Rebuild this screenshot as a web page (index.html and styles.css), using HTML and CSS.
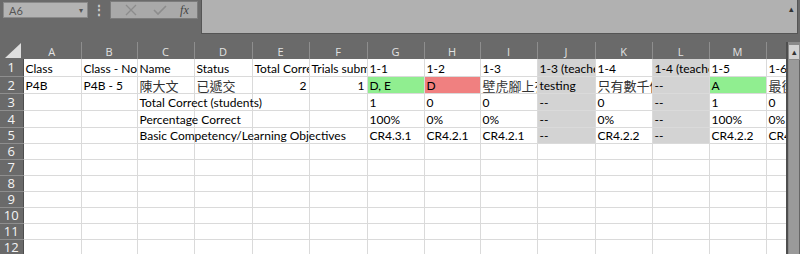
FILE: index.html
```html
<!DOCTYPE html>
<html lang="zh-Hant">
<head>
  <meta charset="UTF-8" />
  <title>Sheet1</title>
  <link rel="stylesheet" href="styles.css">
</head>
<body>
  <div class="toolbar">
    <div class="namebox">
      <span>A6</span>
      <span class="caret">&#9662;</span>
    </div>
    <div class="grip">&#8942;</div>
    <div class="fbuttons">
      <svg width="16" height="14" viewBox="0 0 16 14"><path d="M3 2 L13 12 M13 2 L3 12" stroke="#8c8c8c" stroke-width="1.3" fill="none"/></svg>
      <svg width="16" height="14" viewBox="0 0 16 14"><path d="M2 7 L6 11 L14 3" stroke="#8c8c8c" stroke-width="1.6" fill="none"/></svg>
      <span class="fx">fx</span>
    </div>
    <div class="formula">
      <span class="collapse">&#9652;</span>
    </div>
  </div>

  <div class="sheet">
    <div class="grid">
      <table>
        <colgroup>
          <col class="c-hd"><col class="c58"><col class="c56"><col class="c57"><col class="c58">
          <col class="c57"><col class="c58"><col class="c57"><col class="c56"><col class="c57">
          <col class="c58"><col class="c57"><col class="c57"><col class="c57"><col class="c57">
        </colgroup>
        <tr class="hd">
          <th class="corner"><span class="tri"></span></th>
          <th>A</th><th>B</th><th>C</th><th>D</th><th>E</th><th>F</th><th>G</th>
          <th>H</th><th>I</th><th>J</th><th>K</th><th>L</th><th>M</th><th></th>
        </tr>
        <tr class="tall">
          <th>1</th>
          <td>Class</td><td class="clip">Class - No</td><td>Name</td><td>Status</td>
          <td class="clip">Total Correct</td><td class="clip">Trials submitted</td>
          <td>1-1</td><td>1-2</td><td>1-3</td><td class="grey clip">1-3 (teacher)</td>
          <td>1-4</td><td class="grey clip">1-4 (teacher)</td><td>1-5</td><td class="clip">1-6</td>
        </tr>
        <tr class="tall">
          <th>2</th>
          <td>P4B</td><td>P4B - 5</td><td class="cjk">陳大文</td><td class="cjk">已遞交</td>
          <td class="num">2</td><td class="num">1</td>
          <td class="green">D, E</td><td class="red">D</td><td class="cjk clip">壁虎腳上有</td>
          <td class="grey">testing</td><td class="cjk clip">只有數千個</td><td class="grey">--</td>
          <td class="green">A</td><td class="cjk clip">最後</td>
        </tr>
        <tr class="tall">
          <th>3</th>
          <td></td><td></td><td>Total Correct (students)</td><td></td><td></td><td></td>
          <td>1</td><td>0</td><td>0</td><td class="grey">--</td><td>0</td><td class="grey">--</td>
          <td>1</td><td>0</td>
        </tr>
        <tr class="tall">
          <th>4</th>
          <td></td><td></td><td>Percentage Correct</td><td></td><td></td><td></td>
          <td>100%</td><td>0%</td><td>0%</td><td class="grey">--</td><td>0%</td><td class="grey">--</td>
          <td>100%</td><td>0%</td>
        </tr>
        <tr>
          <th>5</th>
          <td></td><td></td><td>Basic Competency/Learning Objectives</td><td></td><td></td><td></td>
          <td>CR4.3.1</td><td>CR4.2.1</td><td>CR4.2.1</td><td class="grey">--</td><td>CR4.2.2</td>
          <td class="grey">--</td><td>CR4.2.2</td><td>CR4.2.2</td>
        </tr>
        <tr><th>6</th><td></td><td></td><td></td><td></td><td></td><td></td><td></td><td></td><td></td><td></td><td></td><td></td><td></td><td></td></tr>
        <tr><th>7</th><td></td><td></td><td></td><td></td><td></td><td></td><td></td><td></td><td></td><td></td><td></td><td></td><td></td><td></td></tr>
        <tr><th>8</th><td></td><td></td><td></td><td></td><td></td><td></td><td></td><td></td><td></td><td></td><td></td><td></td><td></td><td></td></tr>
        <tr><th>9</th><td></td><td></td><td></td><td></td><td></td><td></td><td></td><td></td><td></td><td></td><td></td><td></td><td></td><td></td></tr>
        <tr><th>10</th><td></td><td></td><td></td><td></td><td></td><td></td><td></td><td></td><td></td><td></td><td></td><td></td><td></td><td></td></tr>
        <tr><th>11</th><td></td><td></td><td></td><td></td><td></td><td></td><td></td><td></td><td></td><td></td><td></td><td></td><td></td><td></td></tr>
        <tr><th>12</th><td></td><td></td><td></td><td></td><td></td><td></td><td></td><td></td><td></td><td></td><td></td><td></td><td></td><td></td></tr>
      </table>
    </div>
    <div class="vscroll">
      <div class="up">&#9652;</div>
      <div class="thumb"></div>
    </div>
  </div>
</body>
</html>
```

FILE: styles.css
```css
body {
  margin: 0;
  background: #6a6a6a;
  font-family: Lato, "Liberation Sans", "Noto Sans CJK TC", sans-serif;
  overflow: hidden;
}
.toolbar {
  height: 42px;
  display: flex;
  align-items: flex-start;
}
.namebox {
  margin: 2px 0 0 3px;
  width: 85px;
  height: 16px;
  box-sizing: border-box;
  background: #b3b3b3;
  border: 1px solid #8a8a8a;
  display: flex;
  align-items: center;
  justify-content: space-between;
  padding: 0 4px 0 5px;
  font-size: 11px;
  color: #555;
}
.caret {
  font-size: 8px;
  color: #555;
}
.grip {
  width: 22px;
  text-align: center;
  color: #d0d0d0;
  font-size: 12px;
  line-height: 20px;
  font-weight: bold;
}
.fbuttons {
  margin-top: 1px;
  width: 88px;
  height: 18px;
  box-sizing: border-box;
  background: #a9a9a9;
  border: 1px solid #7c7c7c;
  display: flex;
  align-items: center;
  justify-content: space-around;
  padding: 0 2px 0 6px;
}
.fx {
  font-family: "Liberation Serif", serif;
  font-style: italic;
  font-size: 12px;
  color: #444;
}
.formula {
  margin-left: 3px;
  flex: 1;
  margin-right: 2px;
  height: 34px;
  box-sizing: border-box;
  background: #b1b1b1;
  border: 1px solid #555;
  border-top: none;
  position: relative;
}
.collapse {
  position: absolute;
  right: 3px;
  top: 3px;
  font-size: 9px;
  color: #333;
}
.sheet {
  display: flex;
}
.grid {
  width: 786px;
  height: 212px;
  overflow: hidden;
}
table {
  border-collapse: collapse;
  table-layout: fixed;
  width: 818px;
  font-size: 12px;
  color: #000;
}
.c-hd { width: 23px; }
.c56 { width: 56px; }
.c57 { width: 57px; }
.c58 { width: 58px; }
th {
  background: #6a6a6a;
  color: #f4f4f4;
  font-weight: normal;
  font-family: "Open Sans", "Liberation Sans", sans-serif;
  font-size: 13px;
  padding: 0;
  box-sizing: border-box;
  height: 16px;
  line-height: 14px;
  border-bottom: 1px solid #8e8e8e;
  border-right: 1px solid #4e4e4e;
}
.hd th {
  height: 17px;
  color: #e2e2e2;
  font-size: 11px;
  border-right: 1px solid #8e8e8e;
  border-bottom: none;
  line-height: 14px;
  padding-top: 2px;
}
.hd .corner {
  position: relative;
  border-right: none;
}
.tri {
  position: absolute;
  right: 2px;
  bottom: 1px;
  width: 0;
  height: 0;
  border-left: 16px solid transparent;
  border-bottom: 15px solid #dedede;
}
td {
  background: #fff;
  box-sizing: border-box;
  height: 16px;
  padding: 0 2px;
  white-space: nowrap;
  overflow: visible;
  border-right: 1px solid #dadada;
  border-bottom: 1px solid #dadada;
  line-height: 14px;
  vertical-align: bottom;
}
tr.tall td, tr.tall th {
  height: 17px;
}
td.clip {
  overflow: hidden;
  text-overflow: clip;
}
td.num {
  text-align: right;
}
.cjk {
  font-family: "Noto Sans CJK TC", sans-serif;
  font-size: 13px;
  color: #333;
}
.green { background: #90ee90; }
.red { background: #f08080; }
.grey { background: #d3d3d3; }
.vscroll {
  width: 12px;
  border-left: 2px solid #4e4e4e;
  background: #8a8a8a;
}
.up {
  height: 14px;
  margin: 3px 1px 0 1px;
  background: #d2d2d2;
  color: #333;
  font-size: 9px;
  text-align: center;
  line-height: 14px;
}
.thumb {
  height: 200px;
  margin: 1px 0 0 1px;
  background: #9a9a9a;
  border-right: 1px solid #666;
}
```
